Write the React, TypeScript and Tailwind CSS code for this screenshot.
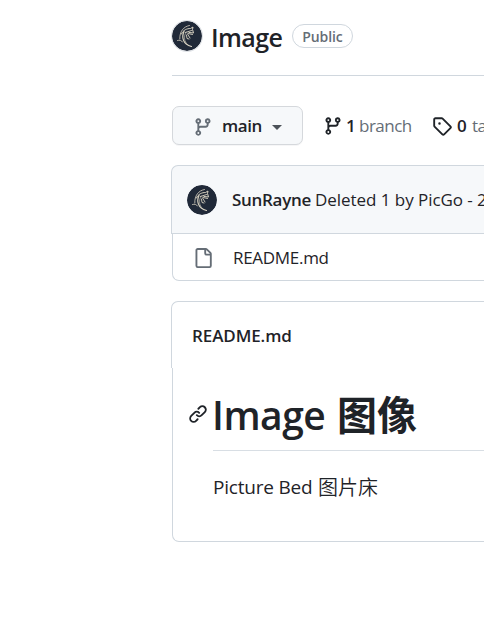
import React from "react";

const paths = {
  branch:
    "M9.5 3.25a2.25 2.25 0 1 1 3 2.122V6A2.5 2.5 0 0 1 10 8.5H6a1 1 0 0 0-1 1v1.128a2.251 2.251 0 1 1-1.5 0V5.372a2.25 2.25 0 1 1 1.5 0v1.836A2.493 2.493 0 0 1 6 7h4a1 1 0 0 0 1-1v-.628A2.25 2.25 0 0 1 9.5 3.25Zm-6 0a.75.75 0 1 0 1.5 0 .75.75 0 0 0-1.5 0Zm8.25-.75a.75.75 0 1 0 0 1.5.75.75 0 0 0 0-1.5ZM4.25 12a.75.75 0 1 0 0 1.5.75.75 0 0 0 0-1.5Z",
  tag: "M1 7.775V2.75C1 1.784 1.784 1 2.75 1h5.025c.464 0 .91.184 1.238.513l6.25 6.25a1.75 1.75 0 0 1 0 2.474l-5.026 5.026a1.75 1.75 0 0 1-2.474 0l-6.25-6.25A1.752 1.752 0 0 1 1 7.775Zm1.5 0c0 .066.026.13.073.177l6.25 6.25a.25.25 0 0 0 .354 0l5.025-5.025a.25.25 0 0 0 0-.354l-6.25-6.25a.25.25 0 0 0-.177-.073H2.75a.25.25 0 0 0-.25.25ZM6 5a1 1 0 1 1 0 2 1 1 0 0 1 0-2Z",
  file: "M2 1.75C2 .784 2.784 0 3.75 0h6.586c.464 0 .909.184 1.237.513l2.914 2.914c.329.328.513.773.513 1.237v9.586A1.75 1.75 0 0 1 13.25 16h-9.5A1.75 1.75 0 0 1 2 14.25Zm1.75-.25a.25.25 0 0 0-.25.25v12.5c0 .138.112.25.25.25h9.5a.25.25 0 0 0 .25-.25V6h-2.75A1.75 1.75 0 0 1 9 4.25V1.5Zm6.75.062V4.25c0 .138.112.25.25.25h2.688l-.011-.013-2.914-2.914-.013-.011Z",
  link: "m7.775 3.275 1.25-1.25a3.5 3.5 0 1 1 4.95 4.95l-2.5 2.5a3.5 3.5 0 0 1-4.95 0 .751.751 0 0 1 .018-1.042.751.751 0 0 1 1.042-.018 1.998 1.998 0 0 0 2.83 0l2.5-2.5a2.002 2.002 0 0 0-2.83-2.83l-1.25 1.25a.751.751 0 0 1-1.042-.018.751.751 0 0 1-.018-1.042Zm-4.69 9.64a1.998 1.998 0 0 0 2.83 0l1.25-1.25a.751.751 0 0 1 1.042.018.751.751 0 0 1 .018 1.042l-1.25 1.25a3.5 3.5 0 1 1-4.95-4.95l2.5-2.5a3.5 3.5 0 0 1 4.95 0 .751.751 0 0 1-.018 1.042.751.751 0 0 1-1.042.018 1.998 1.998 0 0 0-2.83 0l-2.5 2.5a1.998 1.998 0 0 0 0 2.83Z",
};

function Icon({ name, className = "" }: { name: keyof typeof paths; className?: string }) {
  return (
    <svg viewBox="0 0 16 16" className={`size-5 shrink-0 fill-current ${className}`} aria-hidden="true">
      <path d={paths[name]} />
    </svg>
  );
}

function Avatar({ className = "" }: { className?: string }) {
  return (
    <svg viewBox="0 0 30 30" className={`size-[30px] shrink-0 rounded-full ${className}`} aria-hidden="true">
      <circle cx="15" cy="15" r="15" fill="#202938" />
      <g fill="none" stroke="#d9d3c2" strokeLinecap="round" strokeLinejoin="round">
        <path d="M17.500 4.500C11.500 5.500 7.500 10.500 7.800 18" strokeWidth="0.8" />
        <path d="M9.500 13c1.500-4 5.500-5.500 9-5.500l2.500-1.500-.5 2.500 1 3.500-4.500-.5" strokeWidth="1" />
        <path d="M12 10.500C9.500 16 10.500 23 19.500 25.500" strokeWidth="1.200" />
        <path d="M14 11c-2.500 5-1.800 9.500 1.500 12.500" strokeWidth="0.600" />
        <path d="M13.500 11.500l6-2M16 12.500l4.500 1M15.500 13l2.500 4M14.500 14l.5 3.500 2 .5" strokeWidth="0.900" />
        <path d="M5.500 19.500c2-.6 4-.3 5 1.500" strokeWidth="0.8" />
      </g>
    </svg>
  );
}

export default function App() {
  return (
    <div className="h-[627px] w-[484px] overflow-hidden whitespace-nowrap bg-white pl-[171px] font-['Open_Sans','Noto_Sans_CJK_SC',sans-serif] text-[17px] text-[#1f2328]">
      <header className="ml-px flex h-[76px] items-center border-b border-[#d0d7de] pb-[3px]">
        <Avatar className="ring-1 ring-[#dfe2e6]" />
        <h1 className="ml-[9px] w-[81px] pt-0.5 text-[25px] font-semibold leading-none tracking-[-0.6px]">Image</h1>
        <span className="flex h-6 w-[61px] items-center justify-center rounded-full border border-[#d0d7de] pt-px text-[14px] font-semibold leading-none tracking-[-0.1px] text-[#656d76]">
          Public
        </span>
      </header>

      <div className="ml-px mt-[30px] flex h-[39px] items-center">
        <button className="flex h-[39px] w-[131px] shrink-0 items-center rounded-[7px] border border-[#d5d8dc] bg-[#f6f8fa] pl-5 shadow-[0_1px_0_rgba(31,35,40,0.04)]">
          <Icon name="branch" className="mt-0.5 text-[#656d76]" />
          <span className="ml-[9px] w-[50px] pt-px text-left font-semibold tracking-[-0.4px]">main</span>
          <span className="mt-1 size-0 border-x-[5px] border-t-[5px] border-x-transparent border-t-[#4c5259]" />
        </button>
        <Icon name="branch" className="ml-5" />
        <span className="ml-[3px] w-[13px] shrink-0 font-semibold">1</span>
        <span className="w-[73px] shrink-0 tracking-[-0.5px] text-[#656d76]">branch</span>
        <Icon name="tag" className="mt-px" />
        <span className="ml-[5px] w-[15px] shrink-0 font-semibold">0</span>
        <span className="shrink-0 tracking-[-0.6px] text-[#656d76]">ta</span>
      </div>

      <section className="mt-5">
        <div className="flex h-[69px] items-center rounded-tl-[7px] border border-r-0 border-[#d0d7de] bg-[#f6f8fa] pl-[15px]">
          <Avatar />
          <span className="ml-[15px] w-[83px] shrink-0 font-semibold tracking-[-0.3px]">SunRayne</span>
          <span className="shrink-0 tracking-[-0.05px]">Deleted 1 by PicGo - 2</span>
        </div>
        <div className="ml-px flex h-[47px] items-center rounded-bl-[7px] border-b border-l border-[#d0d7de] pl-5">
          <Icon name="file" className="mt-0.5 text-[#656d76]" />
          <span className="ml-5 pt-0.5 tracking-[-0.3px]">README.md</span>
        </div>
      </section>

      <section className="mt-5">
        <h2 className="flex h-[67px] items-center rounded-tl-[7px] border-l border-t border-[#d0d7de] pl-[20px] pt-px font-semibold tracking-[-0.1px]">
          README.md
        </h2>
        <article className="ml-px flex h-[174px] rounded-bl-[7px] border-b border-l border-[#d0d7de] pl-[15px]">
          <Icon name="link" className="mt-9" />
          <div className="ml-[5px] flex-1">
            <h1 className="flex h-[83px] items-center border-b border-[#d8dee4] pt-[11px] text-[39px] font-semibold leading-none">
              <span className="-ml-px w-[125px] tracking-[-0.5px]">Image</span>
              <span className="pb-[3px] font-['Noto_Sans_CJK_SC',sans-serif] text-[40px] font-bold">图像</span>
            </h1>
            <p className="mt-[22px] flex h-7 items-center text-[19px] leading-none">
              <span className="w-[105px] tracking-[-0.2px]">Picture Bed</span>
              <span className="pb-px font-['Noto_Sans_CJK_SC',sans-serif] text-[20px] font-[350]">图片床</span>
            </p>
          </div>
        </article>
      </section>
    </div>
  );
}
